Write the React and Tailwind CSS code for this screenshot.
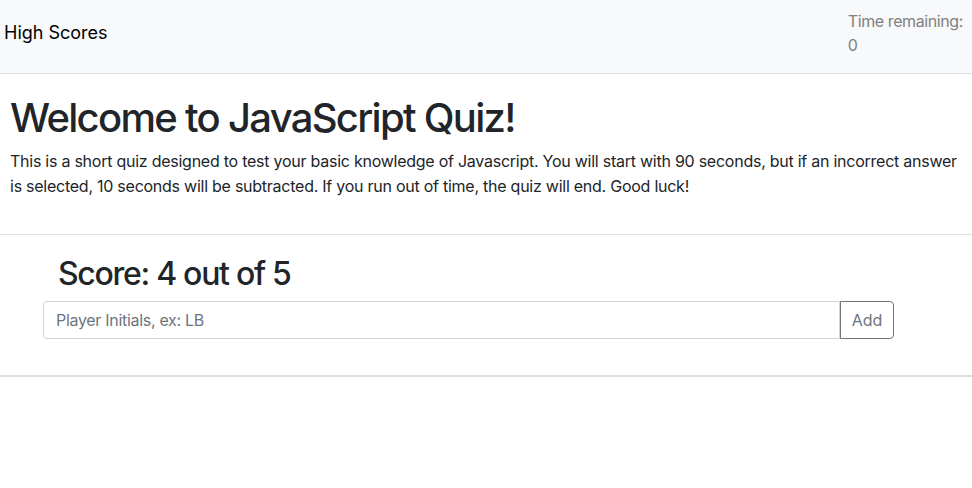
const App = () => {
  return (
    <div className="min-h-[488px] bg-white text-[#212529]" style={{ fontFamily: "Inter, 'Noto Sans', sans-serif" }}>
      {/* Navbar */}
      <nav className="h-[74px] bg-[#f8f9fa] border-b border-[#dee2e6] flex flex-row justify-between">
        <a href="#" className="pl-[4px] pt-[21px] text-[18px] leading-[24px] text-black">
          High Scores
        </a>
        <div className="pt-[9px] pr-[9px] text-[16px] leading-[24px] text-[#808080] tracking-[-0.4px]">
          <div>Time remaining:</div>
          <div>0</div>
        </div>
      </nav>

      {/* Intro */}
      <div className="px-[10px] pt-[20px] pb-[35px] border-b border-[#dee2e6]">
        <h1 className="text-[40px] leading-[48px] font-medium tracking-[-1.7px]">Welcome to JavaScript Quiz!</h1>
        <p className="mt-[7px] text-[16px] leading-[25px] tracking-[-0.25px]">
          This is a short quiz designed to test your basic knowledge of Javascript. You will start with 90 seconds, but if an incorrect answer is selected, 10 seconds will be subtracted. If you run out of time, the quiz will end. Good luck!
        </p>
      </div>

      {/* Score form */}
      <div className="pt-[20px] pb-[36px] border-b-2 border-[#dddddd]">
        <h2 className="ml-[58px] text-[32px] leading-[38px] font-medium tracking-[-1.3px]">Score: 4 out of 5</h2>
        <div className="ml-[43px] mt-[8px] w-[851px] flex flex-row">
          <input
            type="text"
            placeholder="Player Initials, ex: LB"
            className="flex-1 h-[38px] px-[12px] text-[16px] tracking-[-0.3px] border border-[#ced4da] rounded-l-[4px] placeholder:text-[#6c757d] outline-none"
          />
          <button className="w-[54px] h-[38px] text-[16px] text-[#6c757d] border border-[#6c757d] rounded-r-[4px]">
            Add
          </button>
        </div>
      </div>
    </div>
  )
}

export default App
